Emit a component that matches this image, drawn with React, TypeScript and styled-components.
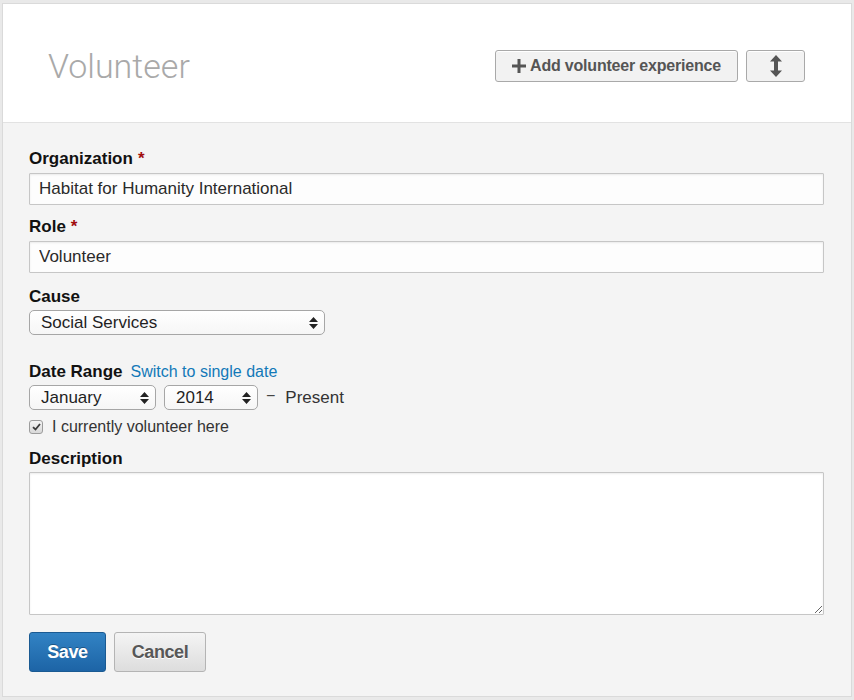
import React, { FC } from 'react';
import styled, { createGlobalStyle } from 'styled-components';

const GlobalStyle = createGlobalStyle`
  html, body {
    margin: 0;
    padding: 0;
    background: #e9e9e9;
  }
  body {
    font-family: "Liberation Sans", Arial, sans-serif;
    color: #222;
  }
`;

const Page = styled.div`
  padding: 3px 2px 0 2px;
  width: 850px;
`;

const Card = styled.div`
  border: 1px solid #dadada;
  background: #f4f4f4;
`;

const Header = styled.div`
  display: flex;
  align-items: center;
  justify-content: space-between;
  background: #fff;
  border-bottom: 1px solid #e2e2e2;
  padding: 46px 46px 40px 45px;
`;

const Title = styled.h1`
  margin: 0;
  font-family: Roboto, "Liberation Sans", sans-serif;
  font-weight: 300;
  font-size: 34px;
  line-height: 32px;
  color: #a9a9a9;
`;

const Actions = styled.div`
  display: flex;
  gap: 8px;
`;

const HeaderButton = styled.button<{ $wide?: boolean }>`
  display: flex;
  align-items: center;
  justify-content: center;
  gap: 4px;
  height: 32px;
  width: ${(p) => (p.$wide ? '243px' : '59px')};
  padding: 0;
  border: 1px solid #a9a9a9;
  border-radius: 3px;
  background: #f2f2f2;
  color: #555;
  font-family: "Liberation Sans", Arial, sans-serif;
  font-weight: bold;
  font-size: 16px;
  letter-spacing: -0.2px;
  box-shadow: inset 0 1px 0 #fff;
`;

const Body = styled.div`
  padding: 26px 27px 24px 26px;
`;

const Label = styled.div<{ $gap?: number }>`
  display: flex;
  align-items: baseline;
  gap: 8px;
  font-weight: bold;
  font-size: 17px;
  line-height: 20px;
  color: #111;
  margin-top: ${(p) => p.$gap ?? 0}px;
`;

const Required = styled.span`
  color: #a10d0d;
  margin-left: -3px;
`;

const SwitchLink = styled.a`
  font-weight: normal;
  font-size: 16px;
  color: #1279b8;
  text-decoration: none;
`;

const TextInput = styled.input`
  display: block;
  box-sizing: border-box;
  width: 100%;
  height: 32px;
  margin-top: 4px;
  padding: 0 9px;
  border: 1px solid #c6c6c6;
  border-radius: 1px;
  background: #fdfdfd;
  box-shadow: inset 0 1px 2px rgba(0, 0, 0, 0.08);
  font-family: "Liberation Sans", Arial, sans-serif;
  font-size: 17px;
  color: #2a2a2a;
  outline: none;
`;

const SelectRow = styled.div`
  display: flex;
  align-items: center;
  gap: 8px;
  margin-top: 3px;
`;

const SelectWrap = styled.div<{ $width: number }>`
  position: relative;
  width: ${(p) => p.$width}px;
  height: 25px;

  svg {
    position: absolute;
    right: 7px;
    top: 6.5px;
    pointer-events: none;
  }
`;

const Select = styled.select`
  appearance: none;
  box-sizing: border-box;
  width: 100%;
  height: 100%;
  padding: 0 0 0 11px;
  border: 1px solid #a6a6a6;
  border-radius: 5px;
  background: linear-gradient(#ffffff, #f6f6f6);
  font-family: "Liberation Sans", Arial, sans-serif;
  font-size: 17px;
  color: #1f1f1f;
  outline: none;
`;

const Dash = styled.span`
  font-size: 16px;
  color: #444;
  margin: -3px 2px 0 0;
`;

const Present = styled.span`
  font-size: 17px;
  color: #333;
`;

const CheckRow = styled.label`
  display: flex;
  align-items: center;
  gap: 9px;
  margin-top: 8px;
  height: 18px;
  font-size: 16px;
  color: #333;
`;

const CheckBox = styled.span`
  display: flex;
  align-items: center;
  justify-content: center;
  box-sizing: border-box;
  width: 14px;
  height: 14px;
  border: 1px solid #9c9c9c;
  border-radius: 3px;
  background: linear-gradient(#f4f4f4, #d8d8d8);
`;

const TextArea = styled.textarea`
  display: block;
  box-sizing: border-box;
  width: 100%;
  height: 143px;
  margin-top: 3px;
  border: 1px solid #c6c6c6;
  border-radius: 1px;
  background: #fff;
  box-shadow: inset 0 1px 2px rgba(0, 0, 0, 0.08);
  resize: vertical;
  outline: none;
`;

const Buttons = styled.div`
  display: flex;
  gap: 8px;
  margin-top: 17px;
`;

const FormButton = styled.button<{ $primary?: boolean }>`
  height: 40px;
  width: ${(p) => (p.$primary ? '77px' : '92px')};
  border-radius: 3px;
  border: 1px solid ${(p) => (p.$primary ? '#1a5a92' : '#b4b4b4')};
  background: ${(p) =>
    p.$primary
      ? 'linear-gradient(#3283c4, #1d64a6)'
      : 'linear-gradient(#f4f4f4, #dddddd)'};
  color: ${(p) => (p.$primary ? '#fff' : '#575757')};
  text-shadow: ${(p) => (p.$primary ? '0 -1px 0 rgba(0,0,0,0.3)' : '0 1px 0 #fff')};
  font-family: "Liberation Sans", Arial, sans-serif;
  font-weight: bold;
  font-size: 18px;
  letter-spacing: -0.4px;
  padding: 0;
`;

const Arrows: FC = () => (
  <svg width="9" height="12" viewBox="0 0 9 12">
    <path d="M4.5 0 L9 5 H0 Z M4.5 12 L9 7 H0 Z" fill="#222" />
  </svg>
);

interface FakeSelectProps {
  width: number;
  value: string;
}

const FakeSelect: FC<FakeSelectProps> = ({ width, value }) => (
  <SelectWrap $width={width}>
    <Select defaultValue={value}>
      <option>{value}</option>
    </Select>
    <Arrows />
  </SelectWrap>
);

const App: FC = () => {
  return (
    <>
      <GlobalStyle />
      <Page>
        <Card>
          <Header>
            <Title>Volunteer</Title>
            <Actions>
              <HeaderButton $wide>
                <svg width="14" height="14" viewBox="0 0 14 14">
                  <path d="M7 0 V14 M0 7 H14" stroke="#555" strokeWidth="3" />
                </svg>
                Add volunteer experience
              </HeaderButton>
              <HeaderButton aria-label="Reorder">
                <svg width="12" height="22" viewBox="0 0 12 22">
                  <path d="M6 0 L12 6.5 H8 V15.5 H12 L6 22 L0 15.5 H4 V6.5 H0 Z" fill="#555" />
                </svg>
              </HeaderButton>
            </Actions>
          </Header>
          <Body>
            <Label>
              Organization <Required>*</Required>
            </Label>
            <TextInput defaultValue="Habitat for Humanity International" />

            <Label $gap={12}>
              Role <Required>*</Required>
            </Label>
            <TextInput defaultValue="Volunteer" />

            <Label $gap={14}>Cause</Label>
            <SelectRow>
              <FakeSelect width={296} value="Social Services" />
            </SelectRow>

            <Label $gap={27}>
              Date Range <SwitchLink href="#">Switch to single date</SwitchLink>
            </Label>
            <SelectRow>
              <FakeSelect width={127} value="January" />
              <FakeSelect width={94} value="2014" />
              <Dash>−</Dash>
              <Present>Present</Present>
            </SelectRow>
            <CheckRow>
              <CheckBox>
                <svg width="9" height="8" viewBox="0 0 9 8">
                  <path d="M1 4.2 L3.5 6.5 L8 1" stroke="#3a3a3a" strokeWidth="1.8" fill="none" />
                </svg>
              </CheckBox>
              I currently volunteer here
            </CheckRow>

            <Label $gap={13}>Description</Label>
            <TextArea />

            <Buttons>
              <FormButton $primary>Save</FormButton>
              <FormButton>Cancel</FormButton>
            </Buttons>
          </Body>
        </Card>
      </Page>
    </>
  );
};

export default App;
